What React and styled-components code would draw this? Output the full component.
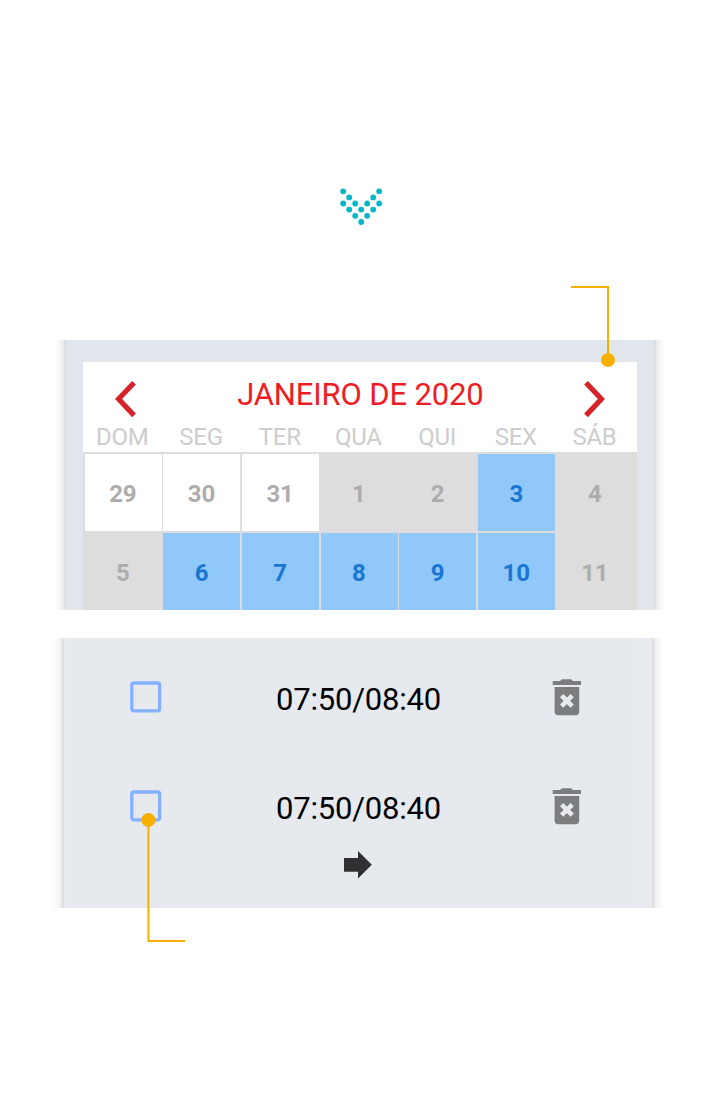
import React from "react";
import styled, { createGlobalStyle } from "styled-components";

const GlobalStyle = createGlobalStyle`
  * { box-sizing: border-box; }
  body { margin: 0; background: #fff; font-family: Roboto, "Liberation Sans", sans-serif; }
  svg { display: block; }
`;

const Page = styled.main`
  position: relative;
  width: 720px;
  height: 1096px;
  overflow: hidden;
  display: flex;
  flex-direction: column;
  background: #fff;
`;

const Intro = styled.header`
  height: 340px;
  flex: none;
  display: flex;
  justify-content: center;
  padding: 186px 0 0 2px;
`;

const Panel = styled.section`
  flex: none;
  height: 270px;
  display: grid;
  grid-template-columns: 10px 2px 588px 2px 10px;
  margin-left: ${(p) => p.$left}px;
  margin-bottom: 28px;
`;

const Shade = styled.div`
  background: linear-gradient(
    to ${(p) => p.$to},
    #e8e8e8 0%,
    #f2f2f2 25%,
    #f9f9f9 55%,
    #ffffff 100%
  );
`;

const Edge = styled.div`
  background: ${(p) => p.$color};
`;

const CalendarBody = styled.div`
  padding: 21.5px 17px 0 16.7px;
  background: #e1e6ed;
  overflow: hidden;
`;

const Calendar = styled.div`
  height: 248.5px;
  display: flex;
  flex-direction: column;
  background: #fff;
`;

const MonthBar = styled.div`
  height: 59.5px;
  flex: none;
  display: flex;
  align-items: flex-start;
  justify-content: space-between;
  padding: 16.5px 30.3px 0 30.5px;
`;

const MonthName = styled.h1`
  margin: -1px 0 0 0.8px;
  font-size: 31px;
  line-height: 36px;
  font-weight: 400;
  letter-spacing: -0.15px;
  color: #ee1c25;
  white-space: nowrap;
`;

const ArrowButton = styled.button`
  margin: 0;
  padding: 0;
  border: 0;
  background: none;
`;

const WeekHeader = styled.div`
  height: 31px;
  flex: none;
  display: grid;
  grid-template-columns: repeat(7, 78.7px);
  padding: 1px 0 0 0.3px;
`;

const Weekday = styled.div`
  text-align: center;
  font-size: 24px;
  line-height: 31px;
  letter-spacing: -0.25px;
  color: #cdcdcd;
`;

const Days = styled.div`
  flex: none;
  display: grid;
  grid-template-columns: repeat(7, 77px);
  grid-auto-rows: 77px;
  gap: 2px 1.7px;
  padding: 2px 0 0 2px;
  height: 158px;
  overflow: hidden;
  background: #dddddd;
`;

const dayColors = {
  outside: ["#ffffff", "#adadad"],
  off: ["#dddddd", "#adadad"],
  open: ["#90c9f9", "#1976d2"],
};

const Day = styled.div`
  display: flex;
  align-items: center;
  justify-content: center;
  padding: 2px 0.9px 0 0;
  font-size: 24px;
  font-weight: 700;
  letter-spacing: -0.2px;
  background: ${(p) => dayColors[p.$kind][0]};
  color: ${(p) => dayColors[p.$kind][1]};
`;

const ScheduleBody = styled.div`
  display: flex;
  flex-direction: column;
  align-items: stretch;
  padding-top: 5px;
  background: linear-gradient(to right, #e8ecf0 0, #e6eaef 10px, #e6eaef 570px, #e8ecf1 100%);
`;

const Slot = styled.div`
  height: 108.7px;
  flex: none;
  display: grid;
  grid-template-columns: 32px 1fr 29px;
  align-items: center;
  padding: 0 71px 0 65.8px;
`;

const SlotTime = styled.span`
  padding: 5px 0 0 3.2px;
  text-align: center;
  font-size: 31px;
  line-height: 36px;
  letter-spacing: -0.22px;
  color: #000;
`;

const NextRow = styled.div`
  margin-top: -10px;
  padding-left: 280px;
`;

const Callout = styled.svg`
  position: absolute;
  left: ${(p) => p.$x}px;
  top: ${(p) => p.$y}px;
`;

const weekdays = ["DOM", "SEG", "TER", "QUA", "QUI", "SEX", "SÁB"];
const days = [
  [29, "outside"], [30, "outside"], [31, "outside"], [1, "off"], [2, "off"], [3, "open"], [4, "off"],
  [5, "off"], [6, "open"], [7, "open"], [8, "open"], [9, "open"], [10, "open"], [11, "off"],
];
const slots = ["07:50/08:40", "07:50/08:40"];

const dots = [
  [5.2, 5.3], [41.2, 5.3],
  [11.2, 11.4], [35.2, 11.4],
  [5.2, 17.5], [17.2, 17.5], [29.2, 17.5], [41.2, 17.5],
  [11.2, 23.6], [23.2, 23.6], [35.2, 23.6],
  [17.2, 29.8], [29.2, 29.8],
  [23.2, 36],
];

function DottedArrow() {
  return (
    <svg width="46" height="42" viewBox="0 0 46 42" fill="#00b8c8">
      {dots.map(([x, y]) => <circle key={`${x}-${y}`} cx={x} cy={y} r="2.9" />)}
    </svg>
  );
}

function Chevron({ direction }) {
  const d = direction === "left" ? "M21 4.8 5.6 21 21 37.4" : "M3 4.8 18.4 21 3 37.4";
  return (
    <svg width="24" height="42" viewBox="0 0 24 42" fill="none" stroke="#d6232b" strokeWidth="5.2">
      <path d={d} />
    </svg>
  );
}

function Checkbox() {
  return (
    <svg width="32" height="32" viewBox="0 0 32 32" role="checkbox" aria-checked="false">
      <rect x="1.8" y="2" width="27.8" height="27.8" rx="2" fill="none" stroke="#83b1ff" strokeWidth="3.3" />
    </svg>
  );
}

function Trash() {
  return (
    <svg width="29" height="38" viewBox="0 0 29 38" fill="#7c7d7f">
      <path d="M.7 3.1H8L10 1.2h9l2 1.9h8v4H.7z" />
      <path d="M2.6 9.1h24.6v24.4a3.7 3.7 0 0 1-3.7 3.7H6.3a3.7 3.7 0 0 1-3.7-3.7z" />
      <path d="m9.6 17.6 10.6 10.6M20.2 17.6 9.6 28.2" stroke="#e6eaef" strokeWidth="4.6" />
    </svg>
  );
}

export default function App() {
  return (
    <>
      <GlobalStyle />
      <Page>
        <Intro><DottedArrow /></Intro>

        <Panel $left={54}>
          <Shade $to="left" />
          <Edge $color="#dedfe0" />
          <CalendarBody>
            <Calendar>
              <MonthBar>
                <ArrowButton aria-label="Mês anterior"><Chevron direction="left" /></ArrowButton>
                <MonthName>JANEIRO DE 2020</MonthName>
                <ArrowButton aria-label="Próximo mês"><Chevron direction="right" /></ArrowButton>
              </MonthBar>
              <WeekHeader>
                {weekdays.map((w) => <Weekday key={w}>{w}</Weekday>)}
              </WeekHeader>
              <Days>
                {days.map(([n, kind]) => <Day key={n} $kind={kind}>{n}</Day>)}
              </Days>
            </Calendar>
          </CalendarBody>
          <Edge $color="#dedfe1" />
          <Shade $to="right" />
        </Panel>

        <Panel $left={52}>
          <Shade $to="left" />
          <Edge $color="#dfdfe0" />
          <ScheduleBody>
            {slots.map((time, i) => (
              <Slot key={i}>
                <Checkbox />
                <SlotTime>{time}</SlotTime>
                <Trash />
              </Slot>
            ))}
            <NextRow>
              <svg width="28" height="29" viewBox="0 0 28 29" fill="#2f3032">
                <path d="M0 8h14V1l13.8 13.7L14 28.4v-6.7H0z" />
              </svg>
            </NextRow>
          </ScheduleBody>
          <Edge $color="#dfe0e1" />
          <Shade $to="right" />
        </Panel>

        <Callout $x={571} $y={284} width="46" height="84" viewBox="0 0 46 84">
          <path d="M0 3h37v73" fill="none" stroke="#f8b000" strokeWidth="2" />
          <circle cx="37" cy="76" r="7" fill="#f8b000" />
        </Callout>
        <Callout $x={140} $y={812} width="46" height="132" viewBox="0 0 46 132">
          <path d="M8.4 8v121H45" fill="none" stroke="#f8b000" strokeWidth="2" />
          <circle cx="8.4" cy="8" r="7" fill="#f8b000" />
        </Callout>
      </Page>
    </>
  );
}
